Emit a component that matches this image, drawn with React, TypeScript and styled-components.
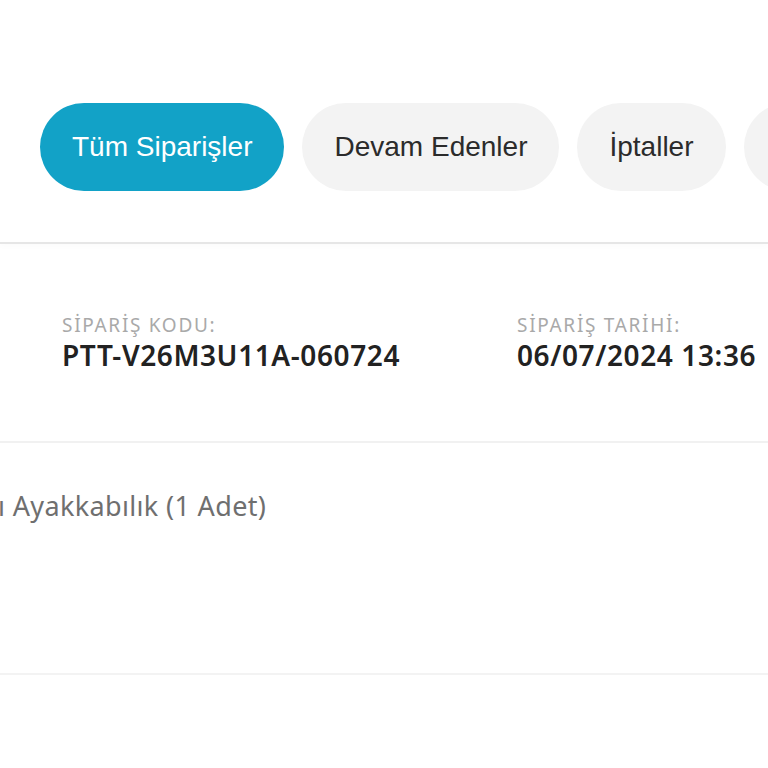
import { createGlobalStyle, styled } from 'styled-components';

const GlobalStyle = createGlobalStyle`
  html, body {
    margin: 0;
    padding: 0;
    background: #ffffff;
  }
  body {
    width: 768px;
    height: 768px;
    overflow: hidden;
    font-family: "Noto Sans", "Liberation Sans", sans-serif;
  }
`;

const Page = styled.div`
  width: 768px;
  overflow: hidden;
`;

const TabBar = styled.div`
  display: flex;
  gap: 18px;
  padding: 103px 0 51px 40px;
  border-bottom: 2px solid #e6e6e6;
  box-shadow: 0 3px 6px rgba(0, 0, 0, 0.015);
  white-space: nowrap;
`;

const Tab = styled.button<{ $active?: boolean }>`
  flex: none;
  height: 88px;
  padding: 0 32px;
  border: none;
  border-radius: 44px;
  background: ${p => (p.$active ? '#12a2c7' : '#f3f3f3')};
  color: ${p => (p.$active ? '#ffffff' : '#2b2b2b')};
  font-family: "Liberation Sans", Arial, sans-serif;
  font-size: 28px;
  cursor: pointer;
`;

const InfoRow = styled.div`
  display: grid;
  grid-template-columns: 455px 1fr;
  padding: 69px 0 69px 62px;
  border-bottom: 2px solid #f1f1f1;
`;

const InfoItem = styled.div`
  display: flex;
  flex-direction: column;
  white-space: nowrap;
`;

const InfoLabel = styled.span`
  font-size: 19px;
  line-height: 25px;
  letter-spacing: 1.7px;
  color: #a9a9a9;
`;

const InfoValue = styled.span`
  font-size: 28px;
  line-height: 34px;
  letter-spacing: 0.6px;
  font-weight: 600;
  color: #222222;
`;

const ProductRow = styled.div`
  height: 184px;
  padding: 46px 0 0 0;
  border-bottom: 2px solid #f3f3f3;
`;

const ProductText = styled.p`
  margin: 0 0 0 -2px;
  font-size: 27px;
  line-height: 34px;
  letter-spacing: 0.35px;
  color: #6f6f6f;
  white-space: nowrap;
`;

const tabs = ['Tüm Siparişler', 'Devam Edenler', 'İptaller', 'İadeler'];

export default function App() {
  return (
    <Page>
      <GlobalStyle />
      <TabBar>
        {tabs.map((tab, i) => (
          <Tab key={tab} $active={i === 0}>
            {tab}
          </Tab>
        ))}
      </TabBar>
      <InfoRow>
        <InfoItem>
          <InfoLabel>SİPARİŞ KODU:</InfoLabel>
          <InfoValue>PTT-V26M3U11A-060724</InfoValue>
        </InfoItem>
        <InfoItem>
          <InfoLabel>SİPARİŞ TARİHİ:</InfoLabel>
          <InfoValue>06/07/2024 13:36</InfoValue>
        </InfoItem>
      </InfoRow>
      <ProductRow>
        <ProductText>ı Ayakkabılık (1 Adet)</ProductText>
      </ProductRow>
    </Page>
  );
}
